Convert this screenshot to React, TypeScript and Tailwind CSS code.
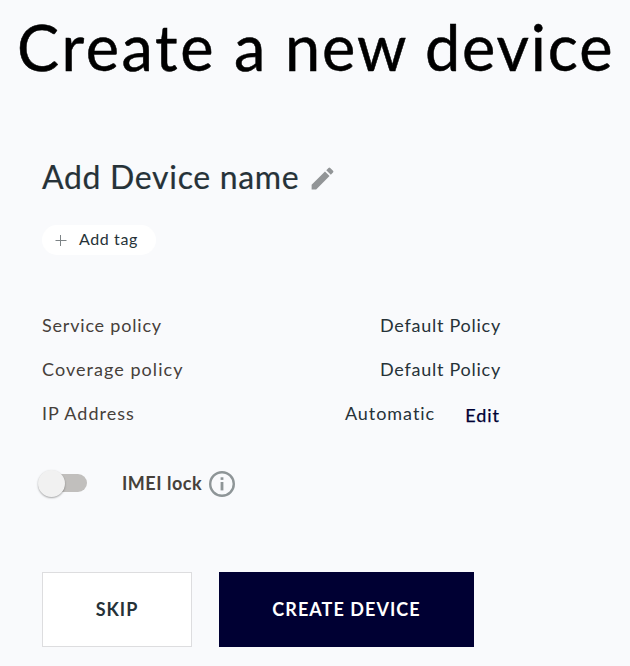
import React from "react";

type RowProps = { label: string; labelClass: string; children: React.ReactNode };

function Row({ label, labelClass, children }: RowProps) {
  return (
    <div className="flex h-11 items-start justify-between text-[18px] leading-[44px] text-[#263238]">
      <span className={`whitespace-nowrap text-[#46403a] ${labelClass}`}>{label}</span>
      {children}
    </div>
  );
}

export default function App() {
  return (
    <main className="h-[666px] w-[630px] overflow-hidden bg-[#f9fafc] font-['Lato',sans-serif]">
      <h1 className="ml-[17px] h-[94px] whitespace-nowrap text-[63px] leading-[94px] tracking-[1.85px] text-black [-webkit-text-stroke:0.5px_black]">
        <span className="tracking-[2.6px]">Create</span> a new device
      </h1>

      <section className="ml-[42px] w-[458px] pt-[59px]">
        <div className="flex h-[48px] items-center">
          <h2 className="w-[266px] whitespace-nowrap text-[32px] leading-[48px] tracking-[0.68px] text-[#263238] [-webkit-text-stroke:0.2px_#263238]">
            Add Device name
          </h2>
          <svg className="mt-[2px] h-[29px] w-[29px] text-[#929597]" viewBox="0 0 24 24" fill="currentColor">
            <path d="M3 17.25V21h3.75L17.81 9.94l-3.75-3.75L3 17.25zM20.71 7.04a.996.996 0 0 0 0-1.41l-2.34-2.34a.996.996 0 0 0-1.41 0l-1.83 1.83 3.75 3.75 1.83-1.83z" />
          </svg>
        </div>

        <button className="mt-[24px] flex h-[30px] w-[114px] items-center rounded-full bg-white pl-[13px]">
          <svg className="h-3 w-3" viewBox="0 0 12 12" fill="none" stroke="#7d8386">
            <path d="M0.5 6.5h11M5.5 1v11" />
          </svg>
          <span className="ml-3 whitespace-nowrap pb-[2px] text-[16px] leading-[28px] tracking-[0.6px] text-[#263238]">
            Add tag
          </span>
        </button>

        <div className="mt-[48px]">
          <Row label="Service policy" labelClass="tracking-[0.8px]">
            <span className="-mr-[1px] tracking-[0.75px]">Default Policy</span>
          </Row>
          <Row label="Coverage policy" labelClass="tracking-[1.05px]">
            <span className="-mr-[1px] tracking-[0.75px]">Default Policy</span>
          </Row>
          <Row label="IP Address" labelClass="tracking-[1px]">
            <span className="flex">
              <span className="tracking-[0.95px]">Automatic</span>
              <a className="ml-[30px] pt-[2px] tracking-[1px] text-[#000033] [-webkit-text-stroke:0.25px_#000033]">
                Edit
              </a>
            </span>
          </Row>
        </div>

        <div className="mt-[28px] flex h-[40px] items-center">
          <span className="flex h-[18px] w-[45px] items-center rounded-full bg-[#c1bfbd]">
            <span className="-ml-[4px] h-[27px] w-[27px] shrink-0 rounded-full bg-[#f1f1f1] shadow-[0_1px_2px_rgba(0,0,0,0.35)]" />
          </span>
          <span className="ml-[35px] w-[87px] whitespace-nowrap text-[18px] font-bold leading-[40px] tracking-[0.5px] text-[#46403a]">
            IMEI lock
          </span>
          <svg className="mt-[2px] h-[26px] w-[26px]" viewBox="0 0 26 26" fill="none">
            <circle cx="13" cy="13" r="11.8" stroke="#8e9597" strokeWidth="2.4" />
            <rect x="11.6" y="6.3" width="2.8" height="2.6" fill="#8e9597" />
            <rect x="11.6" y="11" width="2.8" height="8.4" fill="#8e9597" />
          </svg>
        </div>

        <div className="mt-[69px] flex gap-[27px] text-[18px] font-bold">
          <button className="h-[75px] w-[150px] border border-[#dddddf] bg-white tracking-[1px] text-[#263238]">
            SKIP
          </button>
          <button className="h-[75px] w-[255px] bg-[#000033] tracking-[1.05px] text-white">CREATE DEVICE</button>
        </div>
      </section>
    </main>
  );
}
